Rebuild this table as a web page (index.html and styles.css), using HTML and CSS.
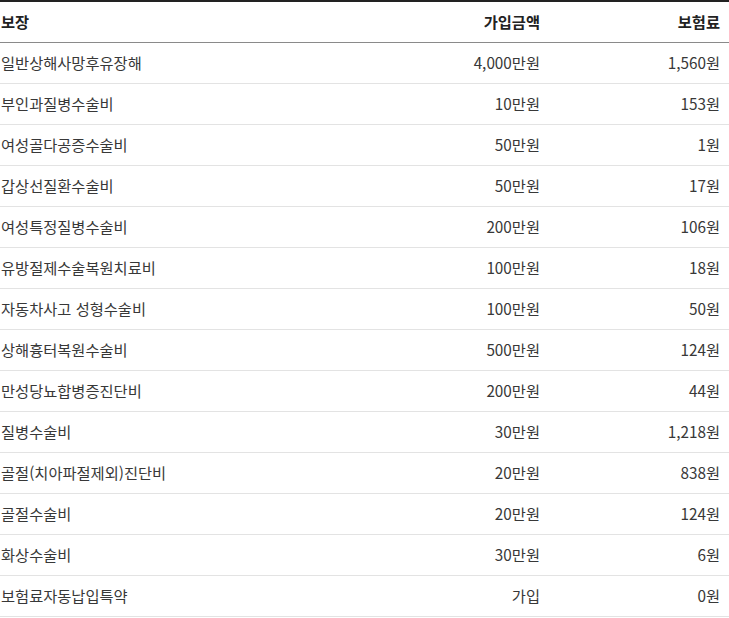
FILE: index.html
```html
<!DOCTYPE html>
<html lang="ko">
<head>
<meta charset="utf-8">
<link rel="stylesheet" href="styles.css">
</head>
<body>
<table class="cov">
  <colgroup><col><col class="c-amt"><col class="c-prem"></colgroup>
  <thead>
    <tr><th class="l">보장</th><th class="r">가입금액</th><th class="r">보험료</th></tr>
  </thead>
  <tbody>
    <tr><td>일반상해사망후유장해</td><td class="r">4,000만원</td><td class="r">1,560원</td></tr>
    <tr><td>부인과질병수술비</td><td class="r">10만원</td><td class="r">153원</td></tr>
    <tr><td>여성골다공증수술비</td><td class="r">50만원</td><td class="r">1원</td></tr>
    <tr><td>갑상선질환수술비</td><td class="r">50만원</td><td class="r">17원</td></tr>
    <tr><td>여성특정질병수술비</td><td class="r">200만원</td><td class="r">106원</td></tr>
    <tr><td>유방절제수술복원치료비</td><td class="r">100만원</td><td class="r">18원</td></tr>
    <tr><td>자동차사고 성형수술비</td><td class="r">100만원</td><td class="r">50원</td></tr>
    <tr><td>상해흉터복원수술비</td><td class="r">500만원</td><td class="r">124원</td></tr>
    <tr><td>만성당뇨합병증진단비</td><td class="r">200만원</td><td class="r">44원</td></tr>
    <tr><td>질병수술비</td><td class="r">30만원</td><td class="r">1,218원</td></tr>
    <tr><td>골절(치아파절제외)진단비</td><td class="r">20만원</td><td class="r">838원</td></tr>
    <tr><td>골절수술비</td><td class="r">20만원</td><td class="r">124원</td></tr>
    <tr><td>화상수술비</td><td class="r">30만원</td><td class="r">6원</td></tr>
    <tr><td>보험료자동납입특약</td><td class="r">가입</td><td class="r">0원</td></tr>
  </tbody>
</table>
</body>
</html>
```
FILE: styles.css
```css
html, body {
  margin: 0;
  padding: 0;
  background: #fff;
}
body {
  font-family: "Noto Sans CJK KR", "Noto Sans", sans-serif;
  font-size: 15.3px;
  color: #383838;
}
.cov {
  width: 729px;
  border-collapse: collapse;
  table-layout: fixed;
  border-top: 2px solid #222;
}
.c-amt { width: 180px; }
.c-prem { width: 180px; }
.cov th, .cov td {
  padding: 0 9px 3px 1px;
  height: 37px;
  line-height: 20px;
  white-space: nowrap;
  vertical-align: middle;
}
.cov th {
  font-weight: 700;
  color: #222;
  border-bottom: 1px solid #8a8a8a;
}
.cov td {
  border-bottom: 1px solid #e3e3e3;
}
.l { text-align: left; }
.r { text-align: right; }
```
